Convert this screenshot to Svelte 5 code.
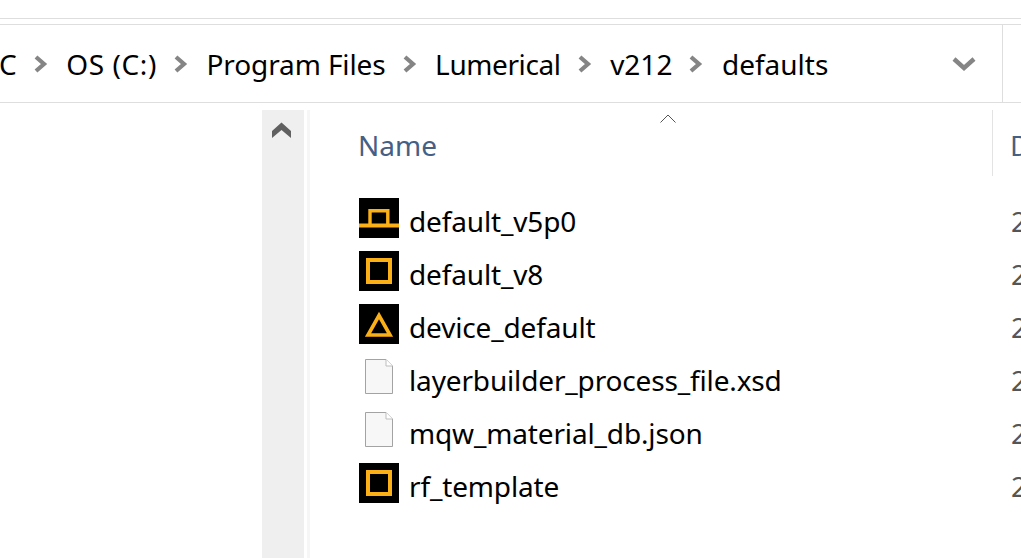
<script>
  const crumbs = [
    { label: 'C', tracking: 0 },
    { label: 'OS (C:)', tracking: 0.6 },
    { label: 'Program Files', tracking: -0.1 },
    { label: 'Lumerical', tracking: -0.4 },
    { label: 'v212', tracking: 0 },
    { label: 'defaults', tracking: 0 }
  ];
  const files = [
    { name: 'default_v5p0', icon: 'slab' },
    { name: 'default_v8', icon: 'square' },
    { name: 'device_default', icon: 'triangle' },
    { name: 'layerbuilder_process_file.xsd', icon: 'file' },
    { name: 'mqw_material_db.json', icon: 'file' },
    { name: 'rf_template', icon: 'square' }
  ];
</script>

<div class="window">
  <div class="ribbon"></div>

  <div class="address">
    <div class="crumbs">
      {#each crumbs as crumb, i}
        {#if i > 0}
          <svg class="sep" width="14" height="18" viewBox="0 0 14 18">
            <path d="M2 2 L10 9 L2 16" fill="none" stroke="#858585" stroke-width="4.2" />
          </svg>
        {/if}
        <span class="crumb" style="letter-spacing: {crumb.tracking}px">{crumb.label}</span>
      {/each}
    </div>
    <svg class="drop" width="24" height="16" viewBox="0 0 24 16">
      <path d="M2 3 L12 12 L22 3" fill="none" stroke="#858585" stroke-width="4.4" />
    </svg>
  </div>

  <div class="body">
    <nav class="sidebar">
      <span class="nav-item">on</span>
    </nav>

    <div class="scrollbar">
      <svg width="19" height="16" viewBox="0 0 19 16">
        <path d="M0 9 L9.5 0.5 L19 9 V16 L9.5 8 L0 16 Z" fill="#606060" />
      </svg>
    </div>
    <div class="gutter"></div>

    <main class="list">
      <svg class="sort" width="16" height="9" viewBox="0 0 16 9">
        <path d="M0.5 8.5 L8 1 L15.5 8.5" fill="none" stroke="#555" stroke-width="1" />
      </svg>

      <div class="head">
        <div class="head-name">Name</div>
        <div class="head-date">Date modified</div>
      </div>

      <ul class="rows">
        {#each files as file}
          <li class="row">
            {#if file.icon === 'file'}
              <svg class="icon" width="40" height="40" viewBox="0 0 40 40">
                <path d="M6.5 2.5 H27 L33.5 9 V36.5 H6.5 Z" fill="#f7f7f7" stroke="#a3a3a3" stroke-width="1" />
                <path d="M27 2.5 V9 H33.5" fill="#fff" stroke="#bdbdbd" stroke-width="1" />
              </svg>
            {:else}
              <svg class="icon" width="40" height="40" viewBox="0 0 40 40">
                <rect width="40" height="40" fill="#000" />
                {#if file.icon === 'slab'}
                  <path d="M0 27.5 H40" fill="none" stroke="#fcb017" stroke-width="4" />
                  <path d="M11 27.5 V12.7 H28.8 V27.5" fill="none" stroke="#fcb017" stroke-width="3.4" />
                {:else if file.icon === 'square'}
                  <rect x="9" y="9" width="22" height="22" fill="none" stroke="#fcb017" stroke-width="4" />
                {:else}
                  <path d="M20 11.5 L31 31 H9 Z" fill="none" stroke="#fcb017" stroke-width="3.6" />
                {/if}
              </svg>
            {/if}
            <span class="file-name">{file.name}</span>
            <span class="file-date">2021</span>
          </li>
        {/each}
      </ul>
    </main>
  </div>
</div>

<style>
  :global(html), :global(body) {
    margin: 0;
    height: 558px;
    overflow: hidden;
    background: #fff;
  }

  .window {
    width: 1021px;
    height: 558px;
    overflow: hidden;
    display: flex;
    flex-direction: column;
    font-family: "Noto Sans", "Open Sans", sans-serif;
    color: #000;
  }

  .ribbon {
    height: 18px;
    border-bottom: 1px solid #dedede;
    margin-bottom: 5px;
    flex: none;
  }

  .address {
    flex: none;
    height: 77px;
    border-top: 1px solid #dedede;
    border-bottom: 1px solid #dedede;
    display: flex;
    align-items: center;
    position: relative;
  }

  .address::after {
    content: "";
    position: absolute;
    left: 1002px;
    top: 0;
    bottom: 0;
    width: 1px;
    background: #dedede;
  }

  .crumbs {
    display: flex;
    align-items: center;
    margin-left: -1px;
    flex: 1;
    white-space: nowrap;
  }

  .crumb {
    font-size: 28px;
    line-height: 38px;
  }

  .sep {
    margin: 0 18.5px 0 17px;
  }

  .drop {
    margin-right: 45px;
  }

  .body {
    flex: 1;
    display: flex;
    min-height: 0;
    margin-top: 7px;
  }

  .sidebar {
    width: 262px;
    flex: none;
    position: relative;
    overflow: hidden;
  }

  .nav-item {
    position: absolute;
    left: -2px;
    top: 437px;
    font-size: 28px;
    line-height: 38px;
  }

  .scrollbar {
    width: 42px;
    flex: none;
    background: #efefef;
    display: flex;
    justify-content: center;
    align-items: flex-start;
    padding: 12px 3px 0 0;
    box-sizing: border-box;
  }

  .gutter {
    width: 3px;
    margin-left: 3px;
    flex: none;
    background: #f6f6f6;
  }

  .list {
    flex: 1;
    min-width: 0;
    padding-left: 48px;
    position: relative;
  }

  .sort {
    position: absolute;
    left: 350px;
    top: 4px;
  }

  .head {
    display: flex;
    height: 66px;
    align-items: center;
    white-space: nowrap;
  }

  .head-name {
    flex: none;
    width: 635px;
    height: 100%;
    display: flex;
    align-items: center;
    border-right: 1px solid #e3e3e3;
    box-sizing: border-box;
    font-size: 28px;
    color: #466085;
    padding-top: 3px;
  }

  .head-date {
    flex: none;
    margin-left: 17px;
    font-size: 28px;
    color: #466085;
    padding-top: 3px;
  }

  .rows {
    list-style: none;
    margin: 15px 0 0;
    padding: 0;
  }

  .row {
    display: flex;
    align-items: center;
    height: 53px;
    white-space: nowrap;
  }

  .icon {
    flex: none;
    margin: 0 10px 0 1px;
  }

  .file-name {
    font-size: 28px;
    letter-spacing: -0.15px;
    width: 602px;
    flex: none;
    padding-top: 6px;
    box-sizing: border-box;
  }

  .file-date {
    flex: none;
    font-size: 28px;
    color: #555;
    padding-top: 6px;
  }
</style>
